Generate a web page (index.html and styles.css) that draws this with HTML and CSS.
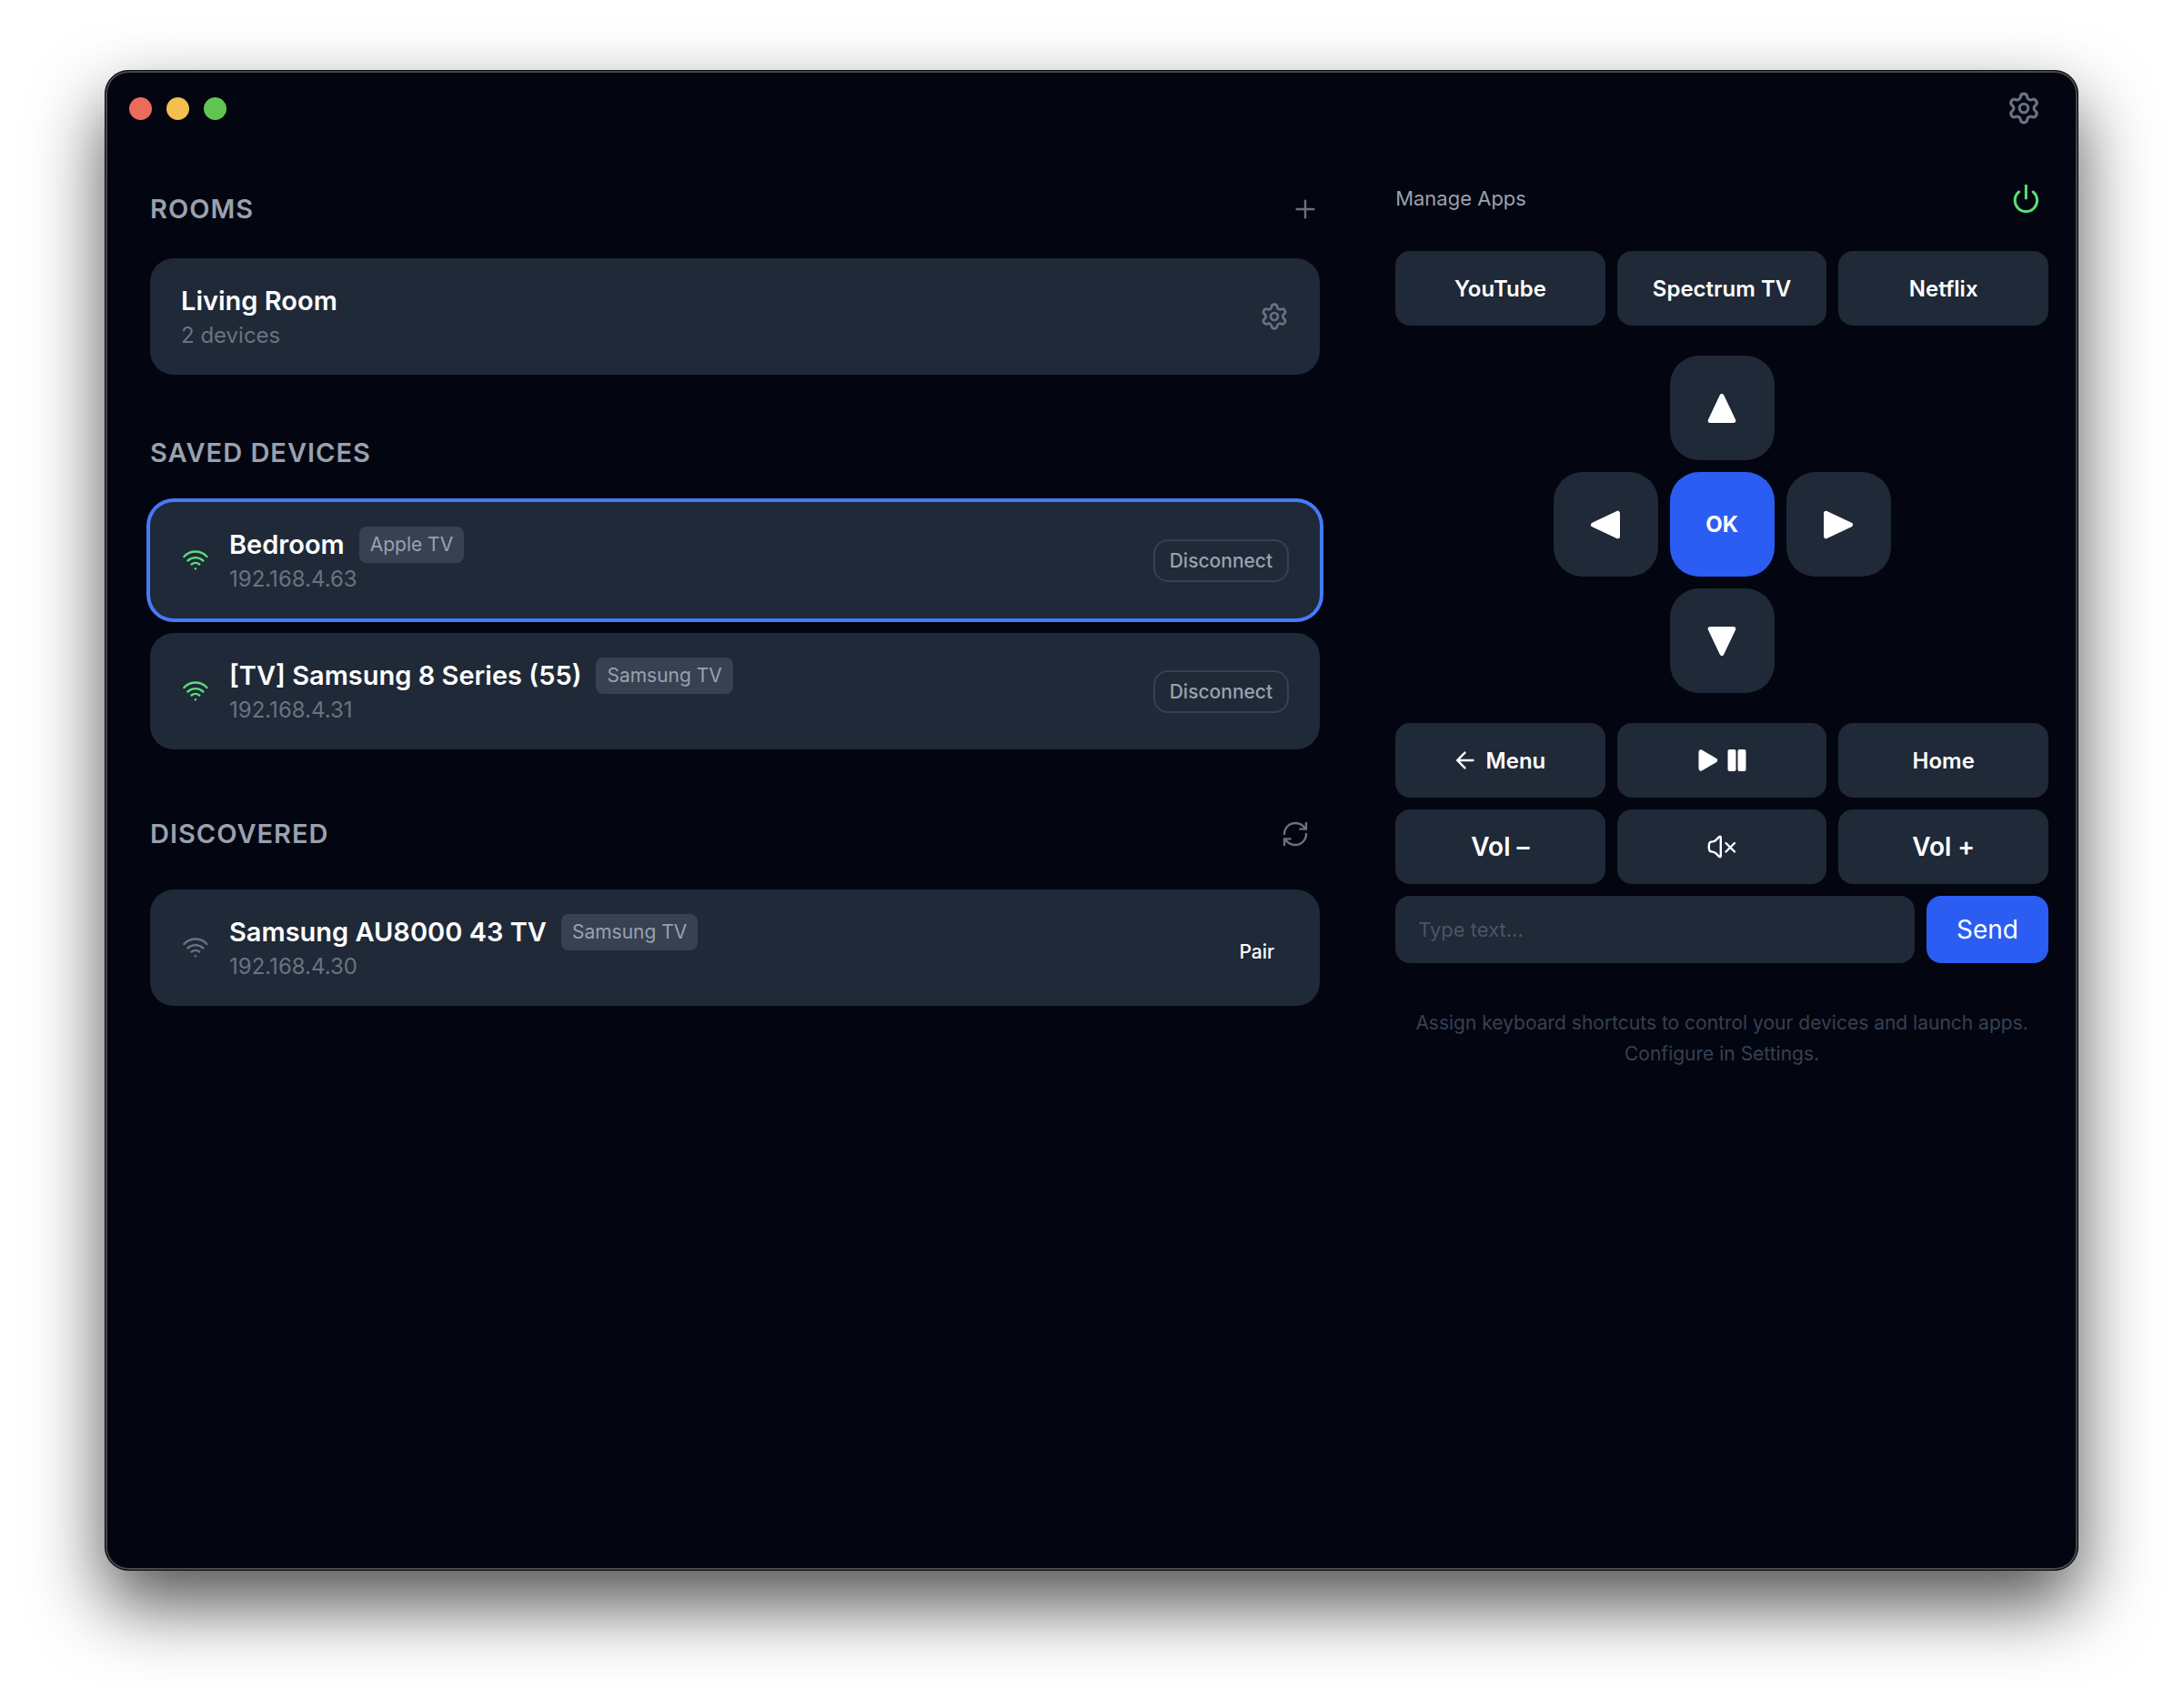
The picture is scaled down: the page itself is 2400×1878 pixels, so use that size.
FILE: index.html
```html
<!DOCTYPE html>
<html lang="en">
<head>
    <meta charset="UTF-8">
    <title>TV Remote</title>
    <link rel="stylesheet" href="styles.css">
</head>
<body>
    <!-- Shared icons -->
    <svg class="sprite" aria-hidden="true">
        <symbol id="gear" viewBox="0 0 24 24">
            <path d="M9.671 4.136a2.34 2.34 0 0 1 4.659 0 2.34 2.34 0 0 0 3.319 1.915 2.34 2.34 0 0 1 2.33 4.033 2.34 2.34 0 0 0 0 3.831 2.34 2.34 0 0 1-2.33 4.033 2.34 2.34 0 0 0-3.319 1.915 2.34 2.34 0 0 1-4.659 0 2.34 2.34 0 0 0-3.32-1.915 2.34 2.34 0 0 1-2.33-4.033 2.34 2.34 0 0 0 0-3.831A2.34 2.34 0 0 1 6.35 6.051a2.34 2.34 0 0 0 3.319-1.915"/>
            <circle cx="12" cy="12" r="3"/>
        </symbol>
        <symbol id="wifi" viewBox="0 0 32 32">
            <path d="M3.4 12A17 17 0 0 1 28.4 12M7.4 16.5A12.5 12.5 0 0 1 24.4 16.5M11.6 20.5A6.8 6.8 0 0 1 20.2 20.5"/>
            <circle cx="15.9" cy="25.2" r="1.2" fill="currentColor" stroke="none"/>
        </symbol>
        <symbol id="triangle" viewBox="0 0 32 32">
            <path d="M16 2.5L28.8 29.5H3.2Z" fill="currentColor" stroke-width="5"/>
        </symbol>
    </svg>

    <div class="window">
        <header class="titlebar">
            <div class="lights">
                <span class="light red"></span>
                <span class="light yellow"></span>
                <span class="light green"></span>
            </div>
            <button class="icon-button" aria-label="Settings"><svg class="icon large"><use href="#gear"/></svg></button>
        </header>

        <main class="content">
            <div class="devices">
                <section>
                    <div class="section-head">
                        <h2>Rooms</h2>
                        <button class="icon-button" aria-label="Add room">
                            <svg class="icon thin" viewBox="0 0 24 24"><path d="M5 12h14M12 5v14"/></svg>
                        </button>
                    </div>
                    <div class="card">
                        <div class="card-text">
                            <h3>Living Room</h3>
                            <p>2 devices</p>
                        </div>
                        <button class="icon-button" aria-label="Room settings"><svg class="icon"><use href="#gear"/></svg></button>
                    </div>
                </section>

                <section>
                    <div class="section-head">
                        <h2>Saved Devices</h2>
                    </div>
                    <div class="card-list">
                        <div class="card selected">
                            <svg class="icon signal on"><use href="#wifi"/></svg>
                            <div class="card-text">
                                <h3>Bedroom <span class="tag">Apple TV</span></h3>
                                <p>192.168.4.63</p>
                            </div>
                            <button class="disconnect">Disconnect</button>
                        </div>
                        <div class="card">
                            <svg class="icon signal on"><use href="#wifi"/></svg>
                            <div class="card-text">
                                <h3>[TV] Samsung 8 Series (55) <span class="tag">Samsung TV</span></h3>
                                <p>192.168.4.31</p>
                            </div>
                            <button class="disconnect">Disconnect</button>
                        </div>
                    </div>
                </section>

                <section>
                    <div class="section-head">
                        <h2>Discovered</h2>
                        <button class="icon-button padded" aria-label="Refresh">
                            <svg class="icon thin" viewBox="0 0 24 24"><path d="M3 12a9 9 0 0 1 9-9 9.75 9.75 0 0 1 6.74 2.74L21 8M21 3v5h-5M21 12a9 9 0 0 1-9 9 9.75 9.75 0 0 1-6.74-2.74L3 16M8 16H3v5"/></svg>
                        </button>
                    </div>
                    <div class="card">
                        <svg class="icon signal"><use href="#wifi"/></svg>
                        <div class="card-text">
                            <h3>Samsung AU8000 43 TV <span class="tag">Samsung TV</span></h3>
                            <p>192.168.4.30</p>
                        </div>
                        <button class="pair">Pair</button>
                    </div>
                </section>
            </div>

            <div class="remote">
                <div class="remote-head">
                    <button class="manage">Manage Apps</button>
                    <button class="icon-button power" aria-label="Power">
                        <svg class="icon" viewBox="0 0 32 32"><path d="M8.6 9A12.2 12.2 0 1 0 24.2 9"/><path d="M16.4 1V17.2" stroke-linecap="butt"/></svg>
                    </button>
                </div>

                <div class="keys">
                    <button class="key">YouTube</button>
                    <button class="key">Spectrum TV</button>
                    <button class="key">Netflix</button>
                </div>

                <div class="dpad">
                    <button class="pad up" aria-label="Up"><svg class="icon"><use href="#triangle"/></svg></button>
                    <button class="pad left" aria-label="Left"><svg class="icon"><use href="#triangle"/></svg></button>
                    <button class="pad ok">OK</button>
                    <button class="pad right" aria-label="Right"><svg class="icon"><use href="#triangle"/></svg></button>
                    <button class="pad down" aria-label="Down"><svg class="icon"><use href="#triangle"/></svg></button>
                </div>

                <div class="controls">
                    <div class="keys">
                        <button class="key">
                            <svg class="arrow" viewBox="0 0 22 22"><path d="M2.2 11H19.5M10.5 2.6L2.2 11L10.5 19.4"/></svg>
                            Menu
                        </button>
                        <button class="key" aria-label="Play or pause">
                            <svg class="play" viewBox="0 0 54 26">
                                <path d="M3 4.2Q3 2.2 5 3.2L20 12Q21.6 13 20 14L5 22.8Q3 23.8 3 21.8Z" fill="currentColor" stroke-width="3"/>
                                <rect x="33.5" y="1" width="9" height="24" rx="2" fill="currentColor" stroke="none"/>
                                <rect x="44.5" y="1" width="9" height="24" rx="2" fill="currentColor" stroke="none"/>
                            </svg>
                        </button>
                        <button class="key">Home</button>
                        <button class="key volume">Vol –</button>
                        <button class="key" aria-label="Mute">
                            <svg class="mute" viewBox="0 0 34 28">
                                <path d="M14 3.2Q15.8 2 15.8 4V24Q15.8 26 14 24.8L10.6 21.4Q9 19.8 7 19.6L5.4 19.4Q3.6 19.2 3.1 17.4Q2.4 14 3.1 10.6Q3.6 8.8 5.4 8.6L7 8.4Q9 8.2 10.6 6.6Z"/>
                                <path d="M21.5 10L31 19.5M31 10L21.5 19.5"/>
                            </svg>
                        </button>
                        <button class="key volume">Vol +</button>
                    </div>
                    <form class="type-row">
                        <input type="text" placeholder="Type text..." aria-label="Type text">
                        <button class="send" type="button">Send</button>
                    </form>
                </div>

                <p class="hint">Assign keyboard shortcuts to control your devices and launch apps. Configure in Settings.</p>
            </div>
        </main>
    </div>
</body>
</html>
```
FILE: styles.css
```css
* {
    box-sizing: border-box;
}
body {
    margin: 0;
    min-height: 100vh;
    padding: 77px 115px 151px;
    display: flex;
    background: #fff;
    color: #fff;
    font-family: Inter, "Liberation Sans", sans-serif;
}
h2, h3, p {
    margin: 0;
}
button, input {
    font: inherit;
    color: inherit;
    border: none;
    background: none;
    padding: 0;
}
button {
    cursor: pointer;
}
.sprite {
    display: none;
}
.window {
    flex: 1;
    display: flex;
    flex-direction: column;
    background: #030510;
    border: 1px solid #08080a;
    border-radius: 26px;
    box-shadow: inset 0 0 0 2px #45484e, 0 37px 80px rgba(0, 0, 0, 0.68);
}

/* Title bar */
.titlebar {
    display: flex;
    align-items: center;
    justify-content: space-between;
    height: 82px;
    padding: 0 40px 0 26px;
}
.lights {
    display: flex;
    gap: 16px;
}
.light {
    width: 25px;
    height: 25px;
    border-radius: 50%;
}
.red {
    background: #ed6a5e;
}
.yellow {
    background: #f4bf4f;
}
.green {
    background: #61c554;
}

/* Icons */
.icon {
    display: block;
    width: 32px;
    height: 32px;
}
.icon.large {
    width: 38px;
    height: 38px;
}
svg {
    fill: none;
    stroke: currentColor;
    stroke-width: 2;
    stroke-linecap: round;
    stroke-linejoin: round;
}
svg.thin {
    stroke-width: 1.8;
}
.icon-button {
    color: #6a7282;
}
.icon-button.padded {
    padding: 11px;
}

.content {
    display: grid;
    grid-template-columns: 43fr 24fr;
    gap: 83px;
    padding: 33px 32px 48px 49px;
}

/* Left side */
.devices {
    display: flex;
    flex-direction: column;
    gap: 66px;
    padding-top: 17px;
}
.section-head {
    display: flex;
    align-items: center;
    justify-content: space-between;
    min-height: 40px;
    margin-bottom: 34px;
}
.section-head h2 {
    font-size: 29px;
    line-height: 40px;
    font-weight: 600;
    letter-spacing: 1px;
    text-transform: uppercase;
    color: #99a1af;
}
.card-list {
    display: flex;
    flex-direction: column;
    gap: 16px;
}
.card {
    display: flex;
    align-items: center;
    gap: 21px;
    padding: 26px 34px;
    background: #1f2937;
    border-radius: 26px;
}
.card.selected {
    box-shadow: 0 0 0 4px #437bfb;
}
.card-text {
    flex: 1;
}
.card-text h3 {
    display: flex;
    align-items: center;
    gap: 16px;
    font-size: 29px;
    line-height: 42px;
    font-weight: 600;
}
.card-text p {
    font-size: 24px;
    line-height: 34px;
    color: #6a7282;
}
.tag {
    padding: 0 12px;
    background: #374151;
    border-radius: 8px;
    font-size: 21px;
    line-height: 40px;
    font-weight: 400;
    color: #99a1af;
}
.signal {
    color: #6a7282;
    stroke-width: 2.4;
}
.signal.on {
    color: #5bdc78;
}
.disconnect {
    height: 47px;
    padding: 0 16px;
    border: 2px solid #374151;
    border-radius: 16px;
    font-size: 21px;
    font-weight: 500;
    color: #99a1af;
}
.pair {
    padding: 8px 16px 0;
    font-size: 21px;
    font-weight: 500;
}

/* Remote */
.remote {
    display: flex;
    flex-direction: column;
    gap: 33px;
}
.remote-head {
    display: flex;
    align-items: center;
    justify-content: space-between;
}
.manage {
    font-size: 22px;
    color: #99a1af;
}
.power {
    padding: 9px;
    color: #5bdc78;
}
.power svg {
    stroke-width: 3;
}
.keys {
    display: grid;
    grid-template-columns: repeat(3, 1fr);
    gap: 13px;
}
.key {
    display: flex;
    align-items: center;
    justify-content: center;
    gap: 12px;
    height: 82px;
    background: #1f2937;
    border-radius: 16px;
    font-size: 24px;
    font-weight: 600;
}
.key.volume {
    font-size: 28px;
}
.key svg {
    stroke-width: 2.4;
}
.arrow {
    width: 22px;
    height: 22px;
}
.play {
    width: 54px;
    height: 26px;
}
.mute {
    width: 34px;
    height: 28px;
}
.dpad {
    display: grid;
    grid-template-areas: ". up ." "left ok right" ". down .";
    grid-template-columns: repeat(3, 115px);
    gap: 13px;
    justify-content: center;
}
.pad {
    display: flex;
    align-items: center;
    justify-content: center;
    height: 115px;
    background: #1f2937;
    border-radius: 32px;
    font-size: 24px;
    font-weight: 700;
}
.up {
    grid-area: up;
}
.left {
    grid-area: left;
}
.left svg {
    transform: rotate(-90deg);
}
.ok {
    grid-area: ok;
    background: #2b5df3;
}
.right {
    grid-area: right;
}
.right svg {
    transform: rotate(90deg);
}
.down {
    grid-area: down;
}
.down svg {
    transform: rotate(180deg);
}
.controls {
    display: flex;
    flex-direction: column;
    gap: 13px;
}
.type-row {
    display: flex;
    gap: 13px;
}
.type-row input {
    flex: 1;
    min-width: 0;
    height: 74px;
    padding: 0 25px;
    background: #1f2937;
    border-radius: 16px;
    font-size: 22px;
}
.type-row input::placeholder {
    color: #4a5565;
}
.send {
    padding: 0 33px;
    background: #2b5df3;
    border-radius: 16px;
    font-size: 28px;
}
.hint {
    margin-top: 16px;
    font-size: 21px;
    line-height: 34px;
    text-align: center;
    color: #364153;
}
```
